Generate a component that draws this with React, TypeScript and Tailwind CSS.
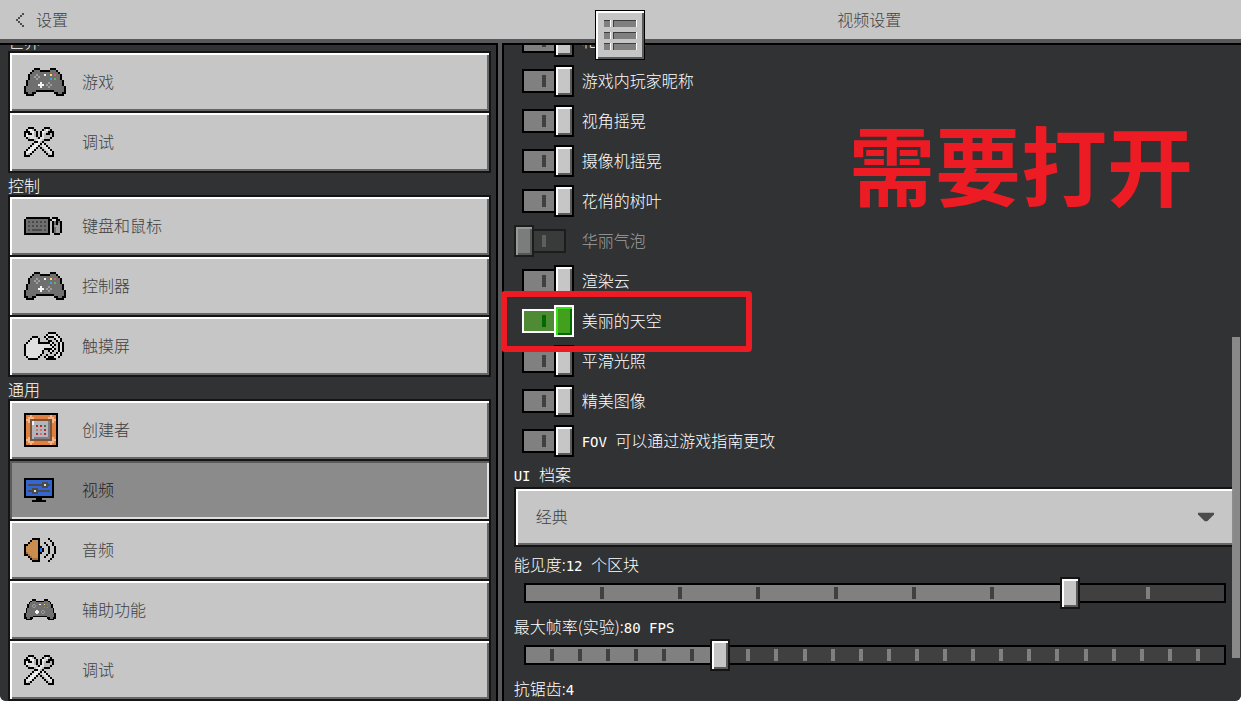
import React from 'react';
import clsx from 'clsx';

const RAISED = 'bg-[#c6c6c6] shadow-[inset_2px_2px_0_#fff,inset_-2px_-2px_0_#666]';

const palette: Record<string, string> = {
  K: '#000000',
  W: '#f4f4f4',
  H: '#e0e0e0',
  L: '#b8b8b8',
  G: '#6f6f6f',
  g: '#9d9d9d',
  d: '#4a4a4a',
  Y: '#f3e05a',
  R: '#e8506c',
  B: '#3fa0e8',
  N: '#6cae5c',
  O: '#c98d50',
  o: '#a56f3c',
  b: '#3566cf',
  u: '#1277ff',
  E: '#e07f3e',
  e: '#f2b58c',
  M: '#7a5538',
  S: '#b4b4bd',
  s: '#7d7d8c',
  r: '#b8272d',
  p: '#d06e70',
  n: '#4e7420',
  y: '#b98a3a',
  c: '#4c4c4c',
};

const controller = [
  '.....KKK.....KKK.....',
  '....KGGGKKKKKGGGK....',
  '...KGGGGGGGGGGGGGK...',
  '..KGGGgGGGWGGYGRGGK..',
  '..KGGgGgGGGGGGGGGGK..',
  '..KGGGgGGGGGGBGNGGK..',
  '.KGGGGGGGGGGGGGGGGGK.',
  '.KGGGGGGWGGGgGGGGGGK.',
  '.KGGGGGWWWGgGgGGGGGK.',
  'KGGGGGGGWGGGgGGGGGGGK',
  'KGGGGGGGGGGGGGGGGGGGK',
  'KGGGGGKKKKKKKKKGGGGGK',
  'KKGGKK.........KKGGKK',
  '.KKKK...........KKKK.',
];

const wrenches = [
  '..KKK.....KKK..',
  '.KHWLK...KLWLK.',
  'KKKHWLK.KWHLKKK',
  'KHKKHLK.KHLKKLK',
  'KWHHHLK.KHLLLLK',
  '.KLHHHLKHHLLLK.',
  '..KKKLHWHLKKK..',
  '.....KKHLK.....',
  '....KHWHKHK....',
  '...KHWHKLHHK...',
  '..KHWHK.KLHHK..',
  '.KHWHK...KLHHK.',
  'KHWHK.....KLHHK',
  'KHLK.......KLHK',
  'KKK.........KKK',
];

const keyboard = [
  '.KKKKKKKKKKKK.KKK..',
  'KGGGGGGGGGGGKKHHKK.',
  'KGdGdGdGdGdGK.KGKGK',
  'KGGGGGGGGGGGK.KGKgK',
  'KGdGdGdGdGdGK.KgggK',
  'KGGGGGGGGGGGK.KGggK',
  'KGdGdddddGdGK.KGggK',
  'KGGGGGGGGGGGK.KGggK',
  'KKKKKKKKKKKKK..KKK.',
];

const touch = [
  '............KKKK....',
  '...........KHHHHK...',
  '....KKK...KHKKKHHK..',
  '...KHHHK...K...KHHK.',
  '..KHHHHK....KK..KHK.',
  '.KHHHHHKKKKKKHK..KHK',
  'KHHHHHHHHHHHHKHK.KHK',
  'KHHHHHHHHHHHHHK..KHK',
  'KHHHHHHHHHKKKKHK.KHK',
  'KHHHHHHHHK..KHK..KHK',
  'KHHHHHHHHK...K..KHK.',
  'KHHHHHHHK..K...KHHK.',
  '.KHHHHHK..KHKKKHHK..',
  '..KKKKK....KKKKK....',
];

const commandBlock = [
  'KKKKKKKKKKKKKKKKK',
  'KEEeEEEEEEEEEeEEK',
  'KEeeeEEEEEEEeeeEK',
  'KeeMMMMMMMMMMMeeK',
  'KEeMWSSSSSSSsMeEK',
  'KEEMWSSSSSSSsMEEK',
  'KEEMSSrSrSnSsMEEK',
  'KEEMSSSSSSSSsMEEK',
  'KEEMSSySpSrSsMEEK',
  'KEEMSSSSSSSSsMEEK',
  'KEEMSSrSpSrSsMEEK',
  'KEEMSSSSSSSSsMEEK',
  'KEeMSssssssssMeEK',
  'KeeMMMMMMMMMMMeeK',
  'KEeeeEEEEEEEeeeEK',
  'KEEeEEEEEEEEEeEEK',
  'KKKKKKKKKKKKKKKKK',
];

const monitor = [
  'KKKKKKKKKKKKKKK',
  'KbbbbbbbbbbbbbK',
  'KbbbbbbbbdddbbK',
  'KbddddddddHddbK',
  'KbbbbbbbbdddbbK',
  'KbbbdddbbbbbbbK',
  'KbdddHdddddddbK',
  'KbbbdddbbbbbbbK',
  'KbbbbbbbbbbbbbK',
  'KKKKKKKKKKKKKKK',
  '......KKK......',
  '....KKKKKKK....',
];

const speaker = [
  '....KKKK....K...',
  '...KOOOK.....K..',
  '..KOOOOK..K...K.',
  'KKOOOOOK...K..K.',
  'KOOOOOOKK...K..K',
  'KOOOOOOKuK..K..K',
  'KOOOOOOKuK..K..K',
  'KoOOOOOKK...K..K',
  'KKoOOOOK...K..K.',
  '..KoOOOK..K...K.',
  '...KoooK.....K..',
  '....KKKK....K...',
];

const chevron = [
  '...c',
  '..c.',
  '.c..',
  'c...',
  '.c..',
  '..c.',
  '...c',
];

function PixelIcon({ rows, width }: { rows: string[]; width: number }) {
  const cols = rows[0].length;
  return (
    <svg width={width} viewBox={`0 0 ${cols} ${rows.length}`} shapeRendering="crispEdges" aria-hidden="true">
      {rows.flatMap((row, y) =>
        row.split('').map((c, x) =>
          c === '.' ? null : <rect key={`${x}-${y}`} x={x} y={y} width={1} height={1} fill={palette[c]} />
        )
      )}
    </svg>
  );
}

const sections = [
  {
    title: '世界',
    items: [
      { name: '游戏', icon: controller, width: 42 },
      { name: '调试', icon: wrenches, width: 30 },
    ],
  },
  {
    title: '控制',
    items: [
      { name: '键盘和鼠标', icon: keyboard, width: 38 },
      { name: '控制器', icon: controller, width: 42 },
      { name: '触摸屏', icon: touch, width: 40 },
    ],
  },
  {
    title: '通用',
    items: [
      { name: '创建者', icon: commandBlock, width: 34 },
      { name: '视频', icon: monitor, width: 30, active: true },
      { name: '音频', icon: speaker, width: 32 },
      { name: '辅助功能', icon: controller, width: 32 },
      { name: '调试', icon: wrenches, width: 30 },
    ],
  },
];

const toggles = [
  { label: '轮廓选择', on: true },
  { label: '游戏内玩家昵称', on: true },
  { label: '视角摇晃', on: true },
  { label: '摄像机摇晃', on: true },
  { label: '花俏的树叶', on: true },
  { label: '华丽气泡', on: false, disabled: true },
  { label: '渲染云', on: true },
  { label: '美丽的天空', on: true, focused: true },
  { label: '平滑光照', on: true },
  { label: '精美图像', on: true },
  { latin: 'FOV ', label: '可以通过游戏指南更改', on: true },
];

function Latin({ children }: { children: React.ReactNode }) {
  return (
    <span className="font-['DejaVu_Sans_Mono',monospace] text-sm leading-none font-normal whitespace-pre">
      {children}
    </span>
  );
}

function Toggle({ latin, label, on, disabled, focused }: {
  latin?: string;
  label: string;
  on: boolean;
  disabled?: boolean;
  focused?: boolean;
}) {
  return (
    <label className={clsx('flex h-10 items-center gap-4', disabled ? 'text-[#a0a0a0]' : 'text-white')}>
      <input
        type="checkbox"
        role="switch"
        defaultChecked={on}
        disabled={disabled}
        className={clsx(
          'relative ml-2 h-6 w-11 shrink-0 appearance-none border-2',
          "before:absolute before:left-[18px] before:top-1 before:h-3 before:w-1 before:content-['']",
          "after:absolute after:-left-2.5 after:-top-1.5 after:h-8 after:w-5 after:border-2 after:content-[''] checked:after:left-[30px]",
          disabled &&
            'border-[#1b1c1c] bg-[#393a3a] before:bg-[#5e5e5e] after:border-[#1b1c1c] after:bg-[#7b7c7c] after:shadow-[inset_2px_2px_0_#989898,inset_-2px_-2px_0_#555]',
          focused &&
            'border-white bg-[#4f8a35] before:bg-[#006a00] after:border-white after:bg-[#43a01c] after:shadow-[inset_2px_2px_0_#3ae01c,inset_-2px_-2px_0_#006a00]',
          !disabled &&
            !focused &&
            'border-black bg-[#808080] before:bg-[#404040] after:border-black after:bg-[#c6c6c6] after:shadow-[inset_2px_2px_0_#fff,inset_-2px_-2px_0_#5a5a5a]'
        )}
      />
      <span className="pb-0.5">
        {latin && <Latin>{latin}</Latin>}
        {label}
      </span>
    </label>
  );
}

function Slider({ id, steps, value, children }: {
  id: string;
  steps: number;
  value: number;
  children: React.ReactNode;
}) {
  const ticks = Array.from({ length: steps - 1 }, (_, i) => i + 1);
  return (
    <div>
      <label htmlFor={id} className="block h-[30px] pt-1.5 leading-[22px]">
        {children}
      </label>
      <div className="relative flex h-8 items-center px-2.5">
        <div className="relative h-5 w-full bg-[#404040]">
          <div className="h-full bg-[#808080]" style={{ width: `${(value / steps) * 100}%` }} />
          {ticks.map((t) => (
            <span
              key={t}
              className={clsx('absolute top-1 -ml-0.5 h-3 w-1', t < value ? 'bg-[#404040]' : 'bg-[#808080]')}
              style={{ left: `${(t / steps) * 100}%` }}
            />
          ))}
          <div className="absolute inset-0 border-2 border-black" />
        </div>
        <input
          id={id}
          type="range"
          min={0}
          max={steps}
          defaultValue={value}
          className="absolute inset-0 h-8 w-full appearance-none bg-transparent [&::-webkit-slider-thumb]:h-8 [&::-webkit-slider-thumb]:w-5 [&::-webkit-slider-thumb]:appearance-none [&::-webkit-slider-thumb]:border-2 [&::-webkit-slider-thumb]:border-[#141414] [&::-webkit-slider-thumb]:bg-[#c6c6c6] [&::-webkit-slider-thumb]:shadow-[inset_2px_2px_0_#fff,inset_-2px_-2px_0_#5a5a5a]"
        />
      </div>
    </div>
  );
}

function Sidebar() {
  return (
    <nav className="w-[40.1%] shrink-0 overflow-hidden border-t-2 border-r-2 border-black bg-[#313233] pr-[5px] pl-2">
      <div className="-mt-4">
        {sections.map((section) => (
          <section key={section.title}>
            <h2 className="h-[22px] pt-1 leading-4 text-white">{section.title}</h2>
            <div className="flex flex-col gap-0.5 bg-[#141414] p-0.5">
              {section.items.map((item) => (
                <button
                  key={item.name}
                  type="button"
                  className={clsx(
                    'flex h-[58px] items-center pl-3.5 text-left',
                    item.active
                      ? 'bg-[#8b8b8b] text-[#1e1e1e] shadow-[inset_2px_2px_0_#5c5c5c,inset_-2px_-2px_0_#e0e0e0]'
                      : `${RAISED} text-[#404040]`
                  )}
                >
                  <span className="w-[58px]">
                    <PixelIcon rows={item.icon} width={item.width} />
                  </span>
                  <span className="pb-0.5">{item.name}</span>
                </button>
              ))}
            </div>
          </section>
        ))}
      </div>
    </nav>
  );
}

function VideoSettings() {
  return (
    <main className="relative min-w-0 flex-1 overflow-hidden border-t-2 border-l-2 border-black bg-[#313233] pr-[5px] pl-2.5 text-white">
      <div className="-mt-6">
        {toggles.map((toggle) => (
          <Toggle key={toggle.label} {...toggle} />
        ))}

        <label htmlFor="ui-profile" className="block h-[26px] pt-0.5 leading-[22px]">
          <Latin>{'UI '}</Latin>档案
        </label>
        <div className="relative">
          <select
            id="ui-profile"
            className={clsx('block h-[60px] w-full appearance-none border-2 border-[#141414] pb-0.5 pl-5 text-[#404040]', RAISED)}
          >
            <option>经典</option>
            <option>袖珍</option>
          </select>
          <svg
            width="16"
            height="9"
            viewBox="0 0 16 9"
            className="pointer-events-none absolute top-1/2 right-[22px] -translate-y-1/2"
            aria-hidden="true"
          >
            <path d="M0 0h16v2L9 9H7L0 2z" fill="#4c4c4c" />
          </svg>
        </div>

        <Slider id="render-distance" steps={9} value={7}>
          能见度:<Latin>{'12 '}</Latin>个区块
        </Slider>
        <Slider id="max-framerate" steps={25} value={7}>
          最大帧率(实验):<Latin>80 FPS</Latin>
        </Slider>
        <Slider id="anti-aliasing" steps={4} value={2}>
          抗锯齿:<Latin>4</Latin>
        </Slider>
      </div>

      {/* Scrollbar thumb */}
      <div className="absolute top-[44.5%] right-px h-[49%] w-2 bg-[#8e8e8e]/95" />
    </main>
  );
}

export default function App() {
  return (
    <div className="relative flex h-screen flex-col overflow-hidden rounded-b-md bg-[#58585a] font-['Noto_Sans_CJK_SC',sans-serif] text-base font-light">
      <header className="mb-1 flex h-[39px] shrink-0 items-center bg-[#c6c6c6] text-[#404040]">
        <div className="w-[40.1%] pl-4">
          <button type="button" className="flex items-center gap-3">
            <PixelIcon rows={chevron} width={8} />
            <span className="pb-0.5">设置</span>
          </button>
        </div>
        <h1 className="flex-1 pb-0.5 text-center">视频设置</h1>
      </header>

      <div className="flex min-h-0 flex-1 gap-1">
        <Sidebar />
        <VideoSettings />
      </div>

      {/* Menu button over the header edge */}
      <button
        type="button"
        aria-label="菜单"
        className="absolute top-2.5 left-1/2 flex h-[50px] w-[50px] -translate-x-[26px] items-center justify-center border border-black bg-[#c6c6c6] shadow-[inset_2px_2px_0_#fff,inset_-2px_-2px_0_#5a5a5a]"
      >
        <svg width="34" height="30" viewBox="0 0 34 30" shapeRendering="crispEdges" aria-hidden="true">
          {[0, 12, 23].map((y) => (
            <g key={y}>
              <path d={`M1 ${y}h7v7h-7zM10 ${y}h23v7h-23z`} fill="#808080" />
              <path d={`M1 ${y}h6v1h-6zM10 ${y}h23v1h-23zM10 ${y}h1v7h-1z`} fill="#3c3c3c" />
              <path d={`M7 ${y}h1v7h-1zM33 ${y}h1v7h-1z`} fill="#fff" />
            </g>
          ))}
        </svg>
      </button>

      {/* Annotations drawn over the screen */}
      <div className="pointer-events-none absolute top-[291px] left-[40.4%] h-[61px] w-[251px] rounded-sm border-6 border-[#ed1c24]" />
      <p className="pointer-events-none absolute top-[120px] right-[48px] text-[86px] leading-[86px] font-bold text-[#ed1c24]">
        需要打开
      </p>
    </div>
  );
}
